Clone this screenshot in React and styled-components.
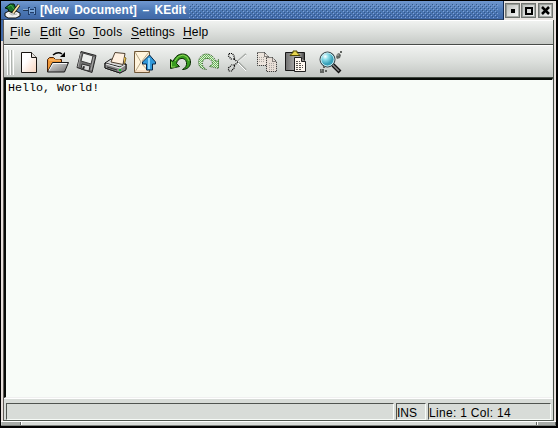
import React from 'react';
import styled, { createGlobalStyle } from 'styled-components';

const Global = createGlobalStyle`
  * { box-sizing: border-box; }
  body { margin: 0; overflow: hidden; background: #000; font-family: "Liberation Sans", Arial, sans-serif; }
`;

const Window = styled.div`
  display: flex;
  flex-direction: column;
  width: 558px;
  height: 428px;
  border: solid #000;
  border-width: 1px 2px 2px 1px;
  background: linear-gradient(#4068a8, #4068a8) 0 0 / 3px 40px no-repeat, #e8e0dc;
`;

const TitleBar = styled.header`
  display: flex;
  height: 19px;
  flex: none;
  background: #e8e4e0;
`;

const TitleArea = styled.div`
  display: flex;
  align-items: center;
  flex: none;
  width: 503px;
  height: 19px;
  padding-left: 3px;
  border-right: 1px solid #102850;
  border-bottom: 1px solid #304868;
  background: linear-gradient(#7098d0, #4c78b4 55%, #4068a8);
`;

const Title = styled.h1`
  margin: 0 0 0 1px;
  width: 149px;
  flex: none;
  color: #fff;
  font-size: 12px;
  line-height: 18px;
  font-weight: 700;
  letter-spacing: 0;
  word-spacing: 2.2px;
  white-space: pre;
`;

const TitleTexture = styled.svg`
  display: block;
  flex: none;
  width: 314px;
  height: 18px;
`;

const WindowButtons = styled.div`
  display: flex;
  gap: 1px;
  padding: 2px 0 0 1px;
`;

const WindowButton = styled.button`
  display: block;
  flex: none;
  width: 15px;
  height: 15px;
  padding: 0;
  border: 1px solid #707470;
  box-shadow: inset 1px 1px #989c98, inset -1px -1px #a8aca8;
  background: linear-gradient(135deg, #b8bcb8, #fafafa);
  svg { display: block; }
  &:last-child { margin-left: 1px; }
`;

const Frame = styled.main`
  display: flex;
  flex-direction: column;
  flex: none;
  height: 401px;
  margin: 0 2px 0 2px;
  border-left: 1px solid #605c58;
  border-right: 1px solid #485048;
  border-bottom: 1px solid #505850;
  background: #d8dcd8;
`;

const MenuBar = styled.nav`
  display: flex;
  align-items: flex-start;
  height: 25px;
  flex: none;
  padding: 1px 0 0 6px;
  border-top: 1px solid #fff;
  border-bottom: 1px solid #484c48;
  background: linear-gradient(#f0f2f0, #dcdfdc 50%, #c6cac6);
  color: #000;
  font-size: 12px;
`;

const MenuItem = styled.span`
  width: ${p => p.$width}px;
  flex: none;
  line-height: 20px;
  letter-spacing: ${p => p.$spacing || 0}px;
  white-space: nowrap;
  u { text-underline-offset: 2px; text-decoration-thickness: 1px; }
`;

const ToolBar = styled.div`
  display: flex;
  align-items: flex-end;
  height: 33px;
  flex: none;
  padding: 0 0 2px 3px;
  border-top: 1px solid #fff;
  border-bottom: 1px solid #404840;
  background: linear-gradient(#f0f2f0, #dcdfdc 50%, #c2c6c2);
`;

const Grip = styled.span`
  width: 7px;
  height: 25px;
  margin-right: 2px;
  flex: none;
  background: repeating-linear-gradient(90deg, #fff 0 1px, #b0b4b0 1px 2px, transparent 2px 3px);
`;

const ToolButton = styled.button`
  display: block;
  width: 26px;
  height: 26px;
  flex: none;
  padding: 0;
  border: 0;
  margin-right: ${p => p.$gap || 3}px;
  background: transparent;
  svg { display: block; }
`;

const Editor = styled.div`
  flex: 1;
  padding: 2px 0 0 2px;
  border-top: 2px solid #080c08;
  border-left: 2px solid #080c08;
  border-right: 1px solid #f0f0f0;
  border-bottom: 1px solid #f0f0f0;
  background: #f8fcf8;
  color: #000;
  font: 11.7px/13px "Liberation Mono", monospace;
  white-space: pre;
`;

const StatusBar = styled.footer`
  display: flex;
  gap: 2px;
  height: 22px;
  flex: none;
  padding: 4px 2px 1px 2px;
  border-top: 1px solid #fff;
  background: #d8dcd8;
`;

const StatusCell = styled.div`
  width: ${p => p.$width}px;
  flex: none;
  height: 17px;
  border: 1px solid;
  border-color: #505450 #f8fcf8 #f8fcf8 #505450;
  color: #000;
  font-size: 12px;
  line-height: 18px;
  letter-spacing: ${p => p.$spacing || 0}px;
  white-space: nowrap;
`;

const ResizeBar = styled.div`
  display: grid;
  grid-template-columns: 20px 1fr 19px;
  flex: 1;
  border-top: 1px solid #fff;
  border-bottom: 1px solid #808480;
  background: #d8dcd8;
`;

const ResizeCorner = styled.span`
  background: #a8aca8;
  border-left: 1px solid ${p => (p.$right ? '#fff' : '#c0c4c0')};
  border-right: 1px solid #606460;
`;

const ResizeEdge = styled.span`
  border-left: 1px solid #fff;
  border-right: 1px solid #606460;
`;

const Icon = ({ children, w = 26, h = 26 }) => (
  <svg width={w} height={h} viewBox={`0 0 ${w} ${h}`} fill="none" aria-hidden="true">{children}</svg>
);

const AppIcon = () => (
  <Icon w={18} h={18}>
    <path d="M1 7l5-4 4 0 2 5-3 3H5L4 8z" fill="#187028" stroke="#001808" />
    <path d="M4 6l3-2 3 4" stroke="#48b048" />
    <path d="M1 12l4-2 3 2 4-2 4 2v3l-4 2H4l-3-2z" fill="#f0f0f0" stroke="#101410" />
    <path d="M5 12l3 2 5-1" stroke="#b0b4b0" />
    <path d="M9 12l6-8" stroke="#181408" strokeWidth="3" />
    <path d="M9 12l6-8" stroke="#f8e0a0" strokeWidth="1.800" />
  </Icon>
);

const PinIcon = () => (
  <Icon w={17} h={18}>
    <g shapeRendering="crispEdges">
      <path d="M1 9h5v1H1z" fill="#203858" />
      <path d="M1 8h5v1H1z" fill="#88a8d0" />
      <path d="M6 6h2v2h4V6h2v8h-2v-2H8v2H6z" fill="#203c68" />
      <path d="M7 7h1v6H7zM8 9h4v2H8zM12 7h1v6h-1z" fill="#78a4d8" />
    </g>
  </Icon>
);

const NewIcon = () => (
  <Icon>
    <defs><linearGradient id="paper" x1="0" y1="0" x2="1" y2="1"><stop offset=".35" stopColor="#fff" /><stop offset="1" stopColor="#f8d4bc" /></linearGradient></defs>
    <path d="M5.500 3.500h10l5 5v15h-15z" fill="url(#paper)" stroke="#181410" />
    <path d="M15.500 3.500v5h5" fill="#e8e4e0" stroke="#181410" />
  </Icon>
);

const OpenIcon = () => (
  <Icon>
    <defs><linearGradient id="folder" x1="0" y1="0" x2="1" y2="1"><stop stopColor="#e8e8e8" /><stop offset="1" stopColor="#707070" /></linearGradient></defs>
    <path d="M2.500 23V10.500l2-2h4l2 2h6v5" fill="#f09838" stroke="#482008" />
    <path d="M4 11h11" stroke="#ffc880" />
    <path d="M7.500 13.500h16l-4 9.500h-17z" fill="url(#folder)" stroke="#181818" />
    <path d="M8 14.500h14M8 14.500l-4 7" stroke="#f8f8f8" />
    <path d="M8 6q5-4 9-1" stroke="#000" strokeWidth="1.500" />
    <path d="M20 3v5h-5z" fill="#000" />
  </Icon>
);

const SaveIcon = () => (
  <Icon>
    <path d="M7 2.500l15 4-4 17-15-5z" fill="#707070" stroke="#282828" />
    <path d="M9 4l10 3-2 8-10-3z" fill="#eceeec" stroke="#404040" />
    <path d="M8 15l8 2-1 5-8-2z" fill="#d8d8d8" stroke="#303030" />
    <path d="M9 17l2 .5-1 3-2-.5z" fill="#303030" />
    <path d="M7 4L4 18M20 8l-3 13" stroke="#a8a8a8" />
  </Icon>
);

const PrintIcon = () => (
  <Icon>
    <path d="M2 14l6-4 15 5v5l-6 4L2 19z" fill="#d8d8d8" stroke="#181818" />
    <path d="M8 13L12 3.500l10 1-2 11z" fill="#fff0e0" stroke="#504030" />
    <path d="M21 8l2 1-2 8" fill="#e8c050" stroke="#806828" />
    <path d="M2 14l15 4 6-3v6l-6 3-15-5z" fill="#888" stroke="#181818" />
    <path d="M3 15l14 4 5-3" stroke="#e8e8e8" strokeWidth="1.200" />
    <path d="M4 18l10 3" stroke="#303030" />
    <path d="M16 21h2" stroke="#00d020" strokeWidth="2" />
  </Icon>
);

const MailIcon = () => (
  <Icon>
    <path d="M2.500 2.500h15v21h-15z" fill="#fff4dc" stroke="#705838" />
    <path d="M3 3l6 10-6 10M17 3l-7 9M10 15l7 8" stroke="#b8a888" />
    <path d="M3 22h14" stroke="#f0c8a8" />
    <path d="M17.500 6l6 7v2h-3v6h-6v-6h-4v-2z" fill="#3098d8" stroke="#082848" />
    <path d="M17 9v11" stroke="#90d8ff" strokeWidth="2" />
  </Icon>
);

const returnArrow = 'M3.500 10.500L6 12.500C8 8 11 5 15.500 5C20.500 5 23.500 9 23.500 13C23.500 17.500 20.500 20.500 15.500 20.500C18.500 19 20 16.500 19.500 13.500C19 10.500 16.500 9 14 9.500C11.500 10 10 12 9.500 14.500L12.500 17.500L3.500 19.500Z';

const UndoIcon = () => (
  <Icon>
    <path d={returnArrow} fill="#389c20" stroke="#082800" />
    <path d="M4.500 13v5h4M8 12q3-6 8-6 5 1 6 6" stroke="#90d858" />
  </Icon>
);

const RedoIcon = () => (
  <Icon>
    <defs><pattern id="greenDots" width="2" height="2" patternUnits="userSpaceOnUse"><path d="M0 0h1v1H0zM1 1h1v1H1z" fill="#68b858" /></pattern></defs>
    <g transform="matrix(-1 0 0 1 26 0)">
      <path d={returnArrow} fill="#e0ecd8" />
      <path d={returnArrow} fill="url(#greenDots)" shapeRendering="crispEdges" />
      <path d={returnArrow} stroke="#305c28" strokeDasharray="1 1" />
    </g>
  </Icon>
);

const CutIcon = () => (
  <Icon>
    <path d="M12 13l9-8M12 12l9 9" stroke="#a8aca8" strokeWidth="2" />
    <path d="M12 14l9-8M11 12l10 10" stroke="#fff" />
    <path d="M4 4.500h3.500L9.500 8v2H6L3.500 7zM9 10l4 3.500M3.500 19l3-3h3v2.500l-3 3.500h-3zM9 16.500l3.500-3" stroke="#000" strokeWidth="1.200" strokeDasharray="1.100 .9" />
  </Icon>
);

const CopyIcon = () => (
  <Icon>
    <g stroke="#202020" strokeDasharray="1 1">
      <path d="M3.500 3.500h7l4 4v9h-11z" fill="#ece4dc" />
      <path d="M12.500 8.500h6l4 4v10h-10z" fill="#e8ded6" />
      <path d="M10.500 3.500v4h4M18.500 8.500v4h4" />
    </g>
    <path d="M5 8.500h6M5 10.500h6M5 12.500h5M15 14.500h5M15 16.500h6M15 18.500h6M15 20.500h6" stroke="#aaa6a2" strokeDasharray="1 1" />
  </Icon>
);

const PasteIcon = () => (
  <Icon>
    <defs><linearGradient id="clipboard"><stop stopColor="#707070" /><stop offset=".65" stopColor="#b8b8b8" /><stop offset="1" stopColor="#404040" /></linearGradient></defs>
    <path d="M2.500 3.500h19v18h-19z" fill="url(#clipboard)" stroke="#181818" />
    <path d="M7 6.500l3-3V2h4v1.500l3 3z" fill="#e8d850" stroke="#504800" />
    <path d="M11.500 8.500h7l4 4v10h-11z" fill="#fff8f0" stroke="#202020" />
    <path d="M18.500 8.500v4h4" fill="#989490" stroke="#202020" />
    <path d="M13 12.500h4M13 14.500h6M13 16.500h7M13 18.500h7M13 20.500h5" stroke="#585450" strokeDasharray="2 1" />
  </Icon>
);

const FindIcon = () => (
  <Icon>
    <defs><radialGradient id="lens" cx=".35" cy=".3"><stop stopColor="#fff" /><stop offset=".4" stopColor="#90e0ec" /><stop offset="1" stopColor="#38a0b8" /></radialGradient></defs>
    <path d="M15 16l7 7" stroke="#101010" strokeWidth="4" />
    <path d="M15 16l6 6" stroke="#888" strokeWidth="1.500" />
    <circle cx="9.500" cy="10.500" r="7.500" fill="url(#lens)" stroke="#303438" />
    <circle cx="9.500" cy="10.500" r="6.500" stroke="#c8e8ec" />
    <path d="M19 5l2-1 2 2-1 3-3 1-1-2zM22 2h2v2h-2zM2 20h4v4H2zM5 17h2v2H5zM7 21h2v2H7z" fill="#606460" />
    <path d="M19 6h2M3 21h1" stroke="#b0b4b0" />
  </Icon>
);

const menus = [
  ['F', 'ile', 30, 0.4], ['E', 'dit', 29, 0.2], ['G', 'o', 24, 0],
  ['T', 'ools', 38, 0.3], ['S', 'ettings', 52, 0.05], ['H', 'elp', 30, 0.15],
];

const tools = [
  ['New', NewIcon, 3], ['Open', OpenIcon, 3], ['Save', SaveIcon, 3], ['Print', PrintIcon, 3],
  ['Mail', MailIcon, 9], ['Undo', UndoIcon, 3], ['Redo', RedoIcon, 3], ['Cut', CutIcon, 3],
  ['Copy', CopyIcon, 3], ['Paste', PasteIcon, 9], ['Find', FindIcon, 3],
];

export default function App() {
  return (
    <>
      <Global />
      <Window>
        <TitleBar>
          <TitleArea>
            <AppIcon /><PinIcon />
            <Title>[New Document] – KEdit</Title>
            <TitleTexture aria-hidden="true" shapeRendering="crispEdges">
              <defs><pattern id="dots" width="4" height="4" patternUnits="userSpaceOnUse"><path d="M0 0h1v1H0zM2 2h1v1H2z" fill="#80a4d8" /><path d="M1 1h1v1H1zM3 3h1v1H3z" fill="#345888" /></pattern></defs>
              <rect y="3" width="309" height="14" fill="url(#dots)" />
            </TitleTexture>
          </TitleArea>
          <WindowButtons>
            <WindowButton aria-label="Minimize"><Icon w={13} h={13}><path d="M5 5h4v4H5z" fill="#000" /></Icon></WindowButton>
            <WindowButton aria-label="Maximize"><Icon w={13} h={13}><path d="M4 4h6v6H4z" stroke="#000" strokeWidth="2" /></Icon></WindowButton>
            <WindowButton aria-label="Close"><Icon w={13} h={13}><path d="M3 3l7 7M10 3l-7 7" stroke="#000" strokeWidth="2.500" /></Icon></WindowButton>
          </WindowButtons>
        </TitleBar>
        <Frame>
          <MenuBar>
            {menus.map(([key, rest, width, spacing]) => <MenuItem key={key} $width={width} $spacing={spacing}><u>{key}</u>{rest}</MenuItem>)}
          </MenuBar>
          <ToolBar>
            <Grip />
            {tools.map(([name, Glyph, gap]) => <ToolButton key={name} aria-label={name} $gap={gap}><Glyph /></ToolButton>)}
          </ToolBar>
          <Editor>Hello, World!</Editor>
          <StatusBar>
            <StatusCell $width={388} />
            <StatusCell $width={30}>INS</StatusCell>
            <StatusCell $width={123} $spacing={0.3}>Line: 1 Col: 14</StatusCell>
          </StatusBar>
        </Frame>
        <ResizeBar><ResizeCorner /><ResizeEdge /><ResizeCorner $right /></ResizeBar>
      </Window>
    </>
  );
}
